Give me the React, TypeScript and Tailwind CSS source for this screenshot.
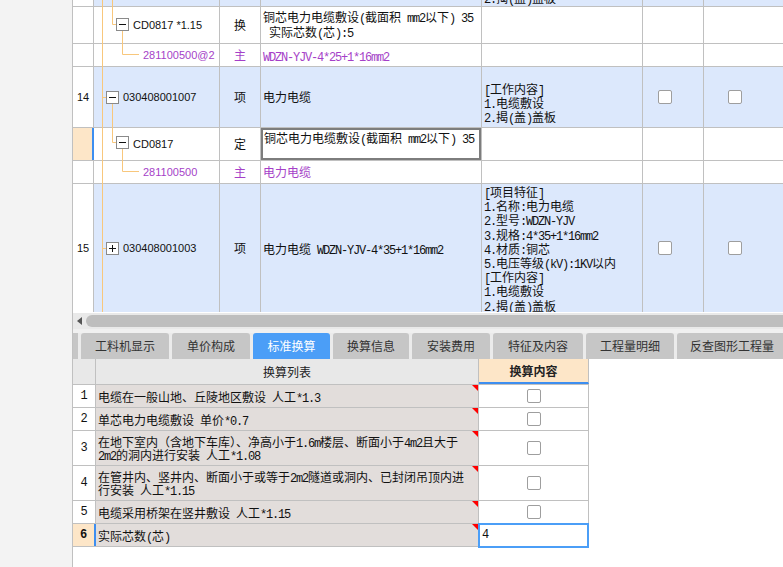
import React from "react";

const MONO = "font-['Liberation_Mono',monospace] text-[12px] tracking-[-1.2px]";
const CODE = "font-['Liberation_Sans',sans-serif] text-[11px]";
const B = "shrink-0 border-r border-[#c0c0c0]";
const BLUE = "bg-[#dce8fc]";
const PURPLE = "text-[#a53fc8]";

function Mix({ t }: { t: string }) {
  const parts = t.split(/([\x20-\x7E]+)/).filter((p) => p.length > 0);
  return (
    <>
      {parts.map((p, i) =>
        /^[\x20-\x7E]+$/.test(p) ? (
          <span key={i} className={MONO}>
            {p}
          </span>
        ) : (
          <span key={i}>{p}</span>
        )
      )}
    </>
  );
}

function Lines({ items, lh }: { items: string[]; lh: string }) {
  return (
    <>
      {items.map((l, i) => (
        <div key={i} className={`${lh} whitespace-pre overflow-visible`}>
          <Mix t={l} />
        </div>
      ))}
    </>
  );
}

function Box() {
  return <div className="w-[14px] h-[14px] rounded-[2px] border border-[#9e9e9e] bg-white" />;
}

function TopTable() {
  return (
    <div className="relative h-[313px] shrink-0 bg-white overflow-hidden">
      {/* partial row */}
      <div className="flex h-[7px] border-b border-[#c0c0c0]">
        <div className={`w-[21px] ${B} bg-white`} />
        <div className={`w-[126px] ${B} ${BLUE}`} />
        <div className={`w-[41px] ${B} ${BLUE}`} />
        <div className={`w-[221px] ${B} ${BLUE}`} />
        <div className={`w-[161px] ${B} ${BLUE} overflow-hidden`}>
          <div className="-mt-[9px] pl-[2px]">
            <Lines items={["2.揭(盖)盖板"]} lh="h-[14px] leading-[14px]" />
          </div>
        </div>
        <div className={`w-[61px] ${B} ${BLUE}`} />
        <div className={`flex-1 ${BLUE}`} />
      </div>

      {/* Row A */}
      <div className="flex h-[37px] border-b border-[#c0c0c0]">
        <div className={`w-[21px] ${B}`} />
        <div className={`w-[126px] ${B} flex items-center pl-[39px] ${CODE} whitespace-pre`}>CD0817 *1.15</div>
        <div className={`w-[41px] ${B} flex items-center justify-center`}>换</div>
        <div className={`w-[221px] ${B} pt-[2px] pl-[2px]`}>
          <Lines items={["铜芯电力电缆敷设(截面积 mm2以下) 35", " 实际芯数(芯):5"]} lh="h-[15px] leading-[15px]" />
        </div>
        <div className={`w-[161px] ${B}`} />
        <div className={`w-[61px] ${B}`} />
        <div className="flex-1" />
      </div>

      {/* Row B */}
      <div className="flex h-[23px] border-b border-[#c0c0c0]">
        <div className={`w-[21px] ${B}`} />
        <div className={`w-[126px] ${B} flex items-center pl-[49px] ${CODE} ${PURPLE}`}>281100500@2</div>
        <div className={`w-[41px] ${B} flex items-center justify-center ${PURPLE}`}>主</div>
        <div className={`w-[221px] ${B} flex flex-col justify-center pl-[2px] ${PURPLE}`}>
          <Lines items={["WDZN-YJV-4*25+1*16mm2"]} lh="h-[15px] leading-[15px]" />
        </div>
        <div className={`w-[161px] ${B}`} />
        <div className={`w-[61px] ${B}`} />
        <div className="flex-1" />
      </div>

      {/* Row 14 */}
      <div className="flex h-[61px] border-b border-[#c0c0c0]">
        <div className={`w-[21px] ${B} flex items-center justify-center ${CODE}`}>14</div>
        <div className={`w-[126px] ${B} ${BLUE} flex items-center pl-[29px] ${CODE}`}>030408001007</div>
        <div className={`w-[41px] ${B} ${BLUE} flex items-center justify-center`}>项</div>
        <div className={`w-[221px] ${B} ${BLUE} flex items-center pl-[2px]`}>电力电缆</div>
        <div className={`w-[161px] ${B} ${BLUE} pt-[15px] pl-[2px]`}>
          <Lines items={["[工作内容]", "1.电缆敷设", "2.揭(盖)盖板"]} lh="h-[14px] leading-[14px]" />
        </div>
        <div className={`w-[61px] ${B} ${BLUE} flex items-center pl-[15px]`}>
          <Box />
        </div>
        <div className={`flex-1 ${BLUE} flex items-center pl-[24px]`}>
          <Box />
        </div>
      </div>

      {/* Row C */}
      <div className="flex h-[33px] border-b border-[#c0c0c0]">
        <div className="w-[21px] shrink-0 bg-[#fde6c8] border-r-2 border-r-[#3d8ef0]" />
        <div className={`w-[126px] ${B} flex items-center pl-[39px] ${CODE}`}>CD0817</div>
        <div className={`w-[41px] ${B} flex items-center justify-center`}>定</div>
        <div className={`w-[221px] ${B}`}>
          <div className="h-full border-2 border-[#7d7d7d] pl-[1px]">
            <Lines items={["铜芯电力电缆敷设(截面积 mm2以下) 35"]} lh="h-[15px] leading-[15px]" />
          </div>
        </div>
        <div className={`w-[161px] ${B}`} />
        <div className={`w-[61px] ${B}`} />
        <div className="flex-1" />
      </div>

      {/* Row D */}
      <div className="flex h-[23px] border-b border-[#c0c0c0]">
        <div className={`w-[21px] ${B}`} />
        <div className={`w-[126px] ${B} flex items-center pl-[49px] ${CODE} ${PURPLE}`}>281100500</div>
        <div className={`w-[41px] ${B} flex items-center justify-center ${PURPLE}`}>主</div>
        <div className={`w-[221px] ${B} flex items-center pl-[2px] ${PURPLE}`}>电力电缆</div>
        <div className={`w-[161px] ${B}`} />
        <div className={`w-[61px] ${B}`} />
        <div className="flex-1" />
      </div>

      {/* Row 15 */}
      <div className="flex h-[128px] overflow-hidden">
        <div className={`w-[21px] ${B} flex items-center justify-center ${CODE}`}>15</div>
        <div className={`w-[126px] ${B} ${BLUE} flex items-center pl-[29px] ${CODE}`}>030408001003</div>
        <div className={`w-[41px] ${B} ${BLUE} flex items-center justify-center`}>项</div>
        <div className={`w-[221px] ${B} ${BLUE} flex flex-col justify-center pl-[2px]`}>
          <Lines items={["电力电缆 WDZN-YJV-4*35+1*16mm2"]} lh="h-[15px] leading-[15px]" />
        </div>
        <div className={`w-[161px] ${B} ${BLUE} pt-[1px] pl-[2px]`}>
          <Lines
            items={[
              "[项目特征]",
              "1.名称:电力电缆",
              "2.型号:WDZN-YJV",
              "3.规格:4*35+1*16mm2",
              "4.材质:铜芯",
              "5.电压等级(kV):1KV以内",
              "[工作内容]",
              "1.电缆敷设",
              "2.揭(盖)盖板",
            ]}
            lh="h-[14.2px] leading-[14px]"
          />
        </div>
        <div className={`w-[61px] ${B} ${BLUE} flex items-center pl-[15px]`}>
          <Box />
        </div>
        <div className={`flex-1 ${BLUE} flex items-center pl-[24px]`}>
          <Box />
        </div>
      </div>

      {/* tree lines */}
      <svg className="absolute left-0 top-0 pointer-events-none" width="710" height="312">
        <g transform="translate(-73 0)" fill="none" strokeWidth="1">
          <path d="M102.5 0V312" stroke="#f8c77c" />
          <path d="M112.5 0V24.5H116.5M122.5 30.5V54.5H139" stroke="#f8c77c" />
          <path d="M102.5 97.5H106.5M112.5 103.5V142.5H116.5M122.5 148.5V171.5H139" stroke="#f8c77c" />
          <path d="M102.5 248.5H106.5" stroke="#f8c77c" />
          <rect x="116.5" y="18.5" width="12" height="12" fill="#fff" stroke="#8a8a8a" />
          <path d="M119 24.5H126" stroke="#111" />
          <rect x="106.5" y="91.5" width="12" height="12" fill="#fff" stroke="#8a8a8a" />
          <path d="M109 97.5H116" stroke="#111" />
          <rect x="116.5" y="136.5" width="12" height="12" fill="#fff" stroke="#8a8a8a" />
          <path d="M119 142.5H126" stroke="#111" />
          <rect x="106.5" y="242.5" width="12" height="12" fill="#fff" stroke="#8a8a8a" />
          <path d="M109 248.5H116M112.5 245V252" stroke="#111" />
        </g>
      </svg>
    </div>
  );
}

function Tabs() {
  const tabs: { label: string; w: string; active?: boolean }[] = [
    { label: "工料机显示", w: "w-[88px]" },
    { label: "单价构成", w: "w-[78px]" },
    { label: "标准换算", w: "w-[77px]", active: true },
    { label: "换算信息", w: "w-[76px]" },
    { label: "安装费用", w: "w-[78px]" },
    { label: "特征及内容", w: "w-[90px]" },
    { label: "工程量明细", w: "w-[88px]" },
    { label: "反查图形工程量", w: "w-[110px]" },
  ];
  return (
    <div className="flex h-[26px] shrink-0 gap-[3px] bg-[#ebebeb] overflow-hidden">
      <div className="w-[5px] shrink-0 bg-[#c6c6c6]" />
      {tabs.map((t) => (
        <div
          key={t.label}
          className={`${t.w} shrink-0 rounded-t-[3px] flex items-center justify-center whitespace-nowrap ${
            t.active ? "bg-[#4b9ef7] text-white" : "bg-[#c6c6c6] text-[#333]"
          }`}
        >
          {t.label}
        </div>
      ))}
    </div>
  );
}

function LRow({
  n,
  h,
  lines,
  sel,
}: {
  n: string;
  h: string;
  lines: string[];
  sel?: boolean;
}) {
  return (
    <div className={`flex ${h} border-b border-[#c0c0c0]`}>
      <div
        className={`w-[23px] shrink-0 flex items-center justify-center ${
          sel
            ? "bg-[#fde6c8] border-r-2 border-r-[#3d8ef0] font-bold font-['Liberation_Mono',monospace] text-[12px]"
            : `border-r border-[#c0c0c0] font-['Liberation_Mono',monospace] text-[12px]`
        }`}
      >
        {n}
      </div>
      <div className="w-[383px] shrink-0 relative bg-[#e2dddb] border-r border-[#c0c0c0] flex flex-col justify-center pl-[2px]">
        <Lines items={lines} lh="h-[13px] leading-[13px]" />
        <div className="absolute top-0 right-0 w-0 h-0 border-l-[6px] border-l-transparent border-t-[6px] border-t-[#ff0000]" />
      </div>
      <div className="w-[110px] shrink-0 relative border-r border-[#c0c0c0] flex items-center justify-center">
        {sel ? (
          <>
            <div className={`w-full pl-[3px] ${MONO}`}>4</div>
            <div className="absolute -top-[1px] -left-[1px] -right-[1px] -bottom-[2px] border-2 border-[#4b9ef7]" />
          </>
        ) : (
          <Box />
        )}
      </div>
    </div>
  );
}

function LowerGrid() {
  return (
    <div className="flex-1 bg-white">
      <div className="w-[516px] flex flex-col">
        <div className="flex h-[26px] border-b border-[#c0c0c0]">
          <div className="w-[23px] shrink-0 bg-[#e8e8e8] border-r border-[#c0c0c0]" />
          <div className="w-[383px] shrink-0 bg-[#e8e8e8] border-r border-[#c0c0c0] flex items-center justify-center text-[#222]">
            换算列表
          </div>
          <div className="w-[110px] shrink-0 bg-[#fde6c8] border-r border-r-[#c0c0c0] border-b-2 border-b-[#3d8ef0] flex items-center justify-center font-bold text-[#222]">
            换算内容
          </div>
        </div>
        <LRow n="1" h="h-[23px]" lines={["电缆在一般山地、丘陵地区敷设 人工*1.3"]} />
        <LRow n="2" h="h-[23px]" lines={["单芯电力电缆敷设 单价*0.7"]} />
        <LRow
          n="3"
          h="h-[35px]"
          lines={["在地下室内（含地下车库）、净高小于1.6m楼层、断面小于4m2且大于", "2m2的洞内进行安装 人工*1.08"]}
        />
        <LRow
          n="4"
          h="h-[35px]"
          lines={["在管井内、竖井内、断面小于或等于2m2隧道或洞内、已封闭吊顶内进", "行安装 人工*1.15"]}
        />
        <LRow n="5" h="h-[23px]" lines={["电缆采用桥架在竖井敷设 人工*1.15"]} />
        <LRow n="6" h="h-[23px]" lines={["实际芯数(芯)"]} sel />
      </div>
    </div>
  );
}

export default function App() {
  return (
    <div className="w-[783px] h-[567px] overflow-hidden flex bg-white font-['Noto_Sans_CJK_SC',sans-serif] text-[12px] text-[#111]">
      <div className="w-[72px] shrink-0 bg-[#f3f3f3]" />
      <div className="flex-1 min-w-0 flex flex-col border-l border-[#c0c0c0]">
        <TopTable />
        <div className="h-[16px] shrink-0 bg-[#e9e9e9] flex items-center">
          <div className="ml-[4px] w-0 h-0 border-y-[4px] border-y-transparent border-r-[5px] border-r-[#555]" />
          <div className="ml-[4px] h-[12px] flex-1 rounded-l-full bg-[#bebebe]" />
        </div>
        <div className="h-[4px] shrink-0 bg-[#f0f0f0]" />
        <Tabs />
        <LowerGrid />
      </div>
    </div>
  );
}
